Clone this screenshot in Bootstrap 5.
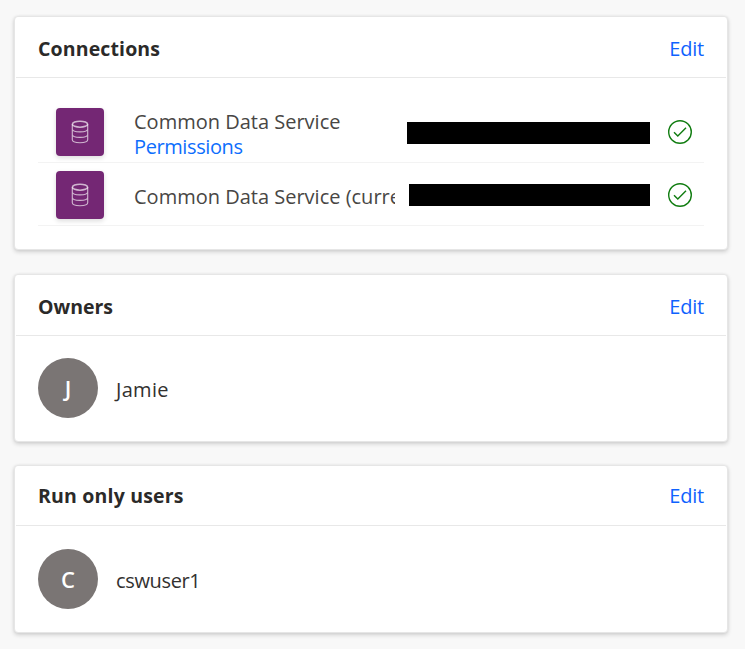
<!DOCTYPE html>
<html lang="en">
<head>
<meta charset="utf-8">
<meta name="viewport" content="width=device-width, initial-scale=1">
<title>Flow details</title>
<link href="https://cdn.jsdelivr.net/npm/bootstrap@5.3.0/dist/css/bootstrap.min.css" rel="stylesheet">
<style>
body { background: #f8f8f8; color: #323130; font-family: "Open Sans", "Noto Sans", sans-serif; font-size: 20px; line-height: 25px; }
a { color: #0f62fe; }
.page { padding: 16px 17px 16px 14px; }
.panel { --bs-card-border-color: #e6e6e6; --bs-card-border-radius: 4px; --bs-card-inner-border-radius: 3px; box-shadow: 0 2px 4px rgba(0,0,0,.16), 0 0 3px rgba(0,0,0,.06); }
.panel-links { height: 234px; margin-bottom: 24px; }
.panel-owners { height: 168px; margin-bottom: 23px; }
.panel-users { height: 168px; }
.panel .card-header { height: 61px; margin: 0 1px; padding: 2px 22px 0; background: #fff; border-bottom: 1px solid #e8e8e8; }
.panel .card-header a { letter-spacing: -.2px; }
.panel-users .card-header { height: 60px; padding-top: 0; }
.panel h2 { margin: 0; font-size: 19.5px; font-weight: 700; line-height: 25px; color: #2b2a29; }
.panel .card-body { padding: 22px 23px; }
.panel-users .card-body { padding-top: 23px; }
.t-conn { letter-spacing: .13px; }
.t-own { letter-spacing: -.02px; }
.t-run { letter-spacing: .18px; }
.panel-links .card-body { padding-top: 24px; }
.conn { height: 63px; padding: 8px 12px 6px 18px; border-bottom: 1px solid #f3f3f3; }
.conn-first { height: 61px; padding-top: 6px; }
.tile { width: 48px; height: 48px; border-radius: 4px; background: #742774; box-shadow: 0 2px 5px rgba(0,0,0,.14); }
.conn-text { width: 261px; margin-left: 30px; padding-top: 2px; white-space: nowrap; overflow: hidden; color: #484644; }
.conn-first .conn-text { padding-top: 4px; }
.conn-text a { color: #0d6efd; letter-spacing: -.4px; }
.mask { height: 22px; background: #000; }
.mask-a { width: 243px; margin-top: 2px; }
.mask-b { width: 241px; }
.ok { margin-left: 18px; }
.avatar { width: 60px; height: 60px; background: #7a7574; color: #fff; font-size: 22px; font-weight: 600; }
.who { margin-left: 18px; padding-top: 2px; }
.who-own { letter-spacing: .3px; }
.who-run { letter-spacing: -.35px; }
</style>
<script src="https://cdn.jsdelivr.net/npm/bootstrap@5.3.0/dist/js/bootstrap.bundle.min.js"></script>
</head>
<body>
<svg class="d-none" xmlns="http://www.w3.org/2000/svg">
  <symbol id="db" viewBox="0 0 18 24"><g fill="none" stroke="#fff" stroke-opacity=".66" stroke-width="1.15"><ellipse cx="9" cy="4.2" rx="7.6" ry="3" stroke-width="1.6"/><path d="M1.300 4.200v15.600c0 1.700 3.500 2.900 7.700 2.900s7.700-1.200 7.700-2.900v-15.600M1.300 9c0 1.700 3.500 2.900 7.700 2.900s7.700-1.200 7.700-2.900M1.300 14.500c0 1.700 3.500 2.900 7.700 2.900s7.700-1.200 7.700-2.900"/></g></symbol>
  <symbol id="check" viewBox="0 0 24 24"><g fill="none" stroke="#107c10" stroke-width="1.400"><circle cx="12" cy="12" r="11.3"/><path d="M6 12.200l3.800 3.800 8.200-8.200"/></g></symbol>
</svg>
<main class="page">
  <section class="card panel panel-links">
    <div class="card-header d-flex align-items-center justify-content-between"><h2 class="t-conn">Connections</h2><a class="text-decoration-none" href="#">Edit</a></div>
    <div class="card-body">
      <div class="conn conn-first d-flex align-items-center">
        <div class="tile d-flex align-items-center justify-content-center flex-shrink-0"><svg width="18" height="24"><use href="#db"/></svg></div>
        <div class="conn-text">Common Data Service<br><a class="text-decoration-none" href="#">Permissions</a></div>
        <div class="mask mask-a ms-auto"></div>
        <svg class="ok flex-shrink-0" width="24" height="24"><use href="#check"/></svg>
      </div>
      <div class="conn d-flex align-items-center">
        <div class="tile d-flex align-items-center justify-content-center flex-shrink-0"><svg width="18" height="24"><use href="#db"/></svg></div>
        <div class="conn-text">Common Data Service (curre</div>
        <div class="mask mask-b ms-auto"></div>
        <svg class="ok flex-shrink-0" width="24" height="24"><use href="#check"/></svg>
      </div>
    </div>
  </section>
  <section class="card panel panel-owners">
    <div class="card-header d-flex align-items-center justify-content-between"><h2 class="t-own">Owners</h2><a class="text-decoration-none" href="#">Edit</a></div>
    <div class="card-body d-flex align-items-start">
      <div class="d-flex align-items-center">
        <div class="avatar rounded-circle d-flex align-items-center justify-content-center">J</div>
        <div class="who who-own">Jamie</div>
      </div>
    </div>
  </section>
  <section class="card panel panel-users">
    <div class="card-header d-flex align-items-center justify-content-between"><h2 class="t-run">Run only users</h2><a class="text-decoration-none" href="#">Edit</a></div>
    <div class="card-body d-flex align-items-start">
      <div class="d-flex align-items-center">
        <div class="avatar rounded-circle d-flex align-items-center justify-content-center">C</div>
        <div class="who who-run">cswuser1</div>
      </div>
    </div>
  </section>
</main>
</body>
</html>
